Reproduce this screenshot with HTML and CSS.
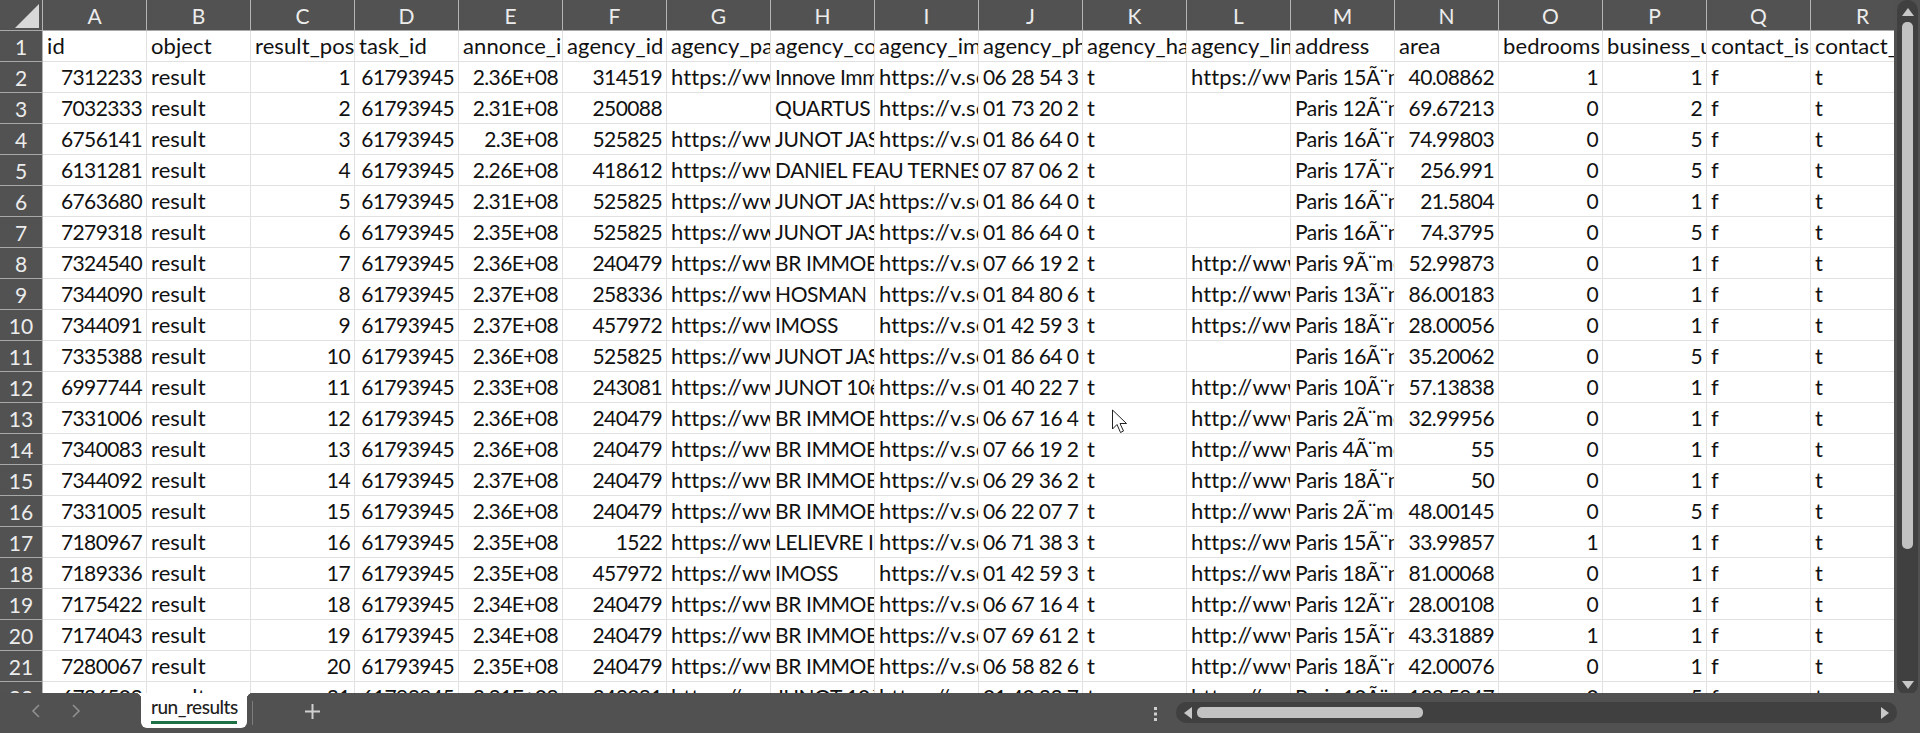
FILE: index.html
```html
<!DOCTYPE html>
<html lang="en">
<head>
<meta charset="utf-8">
<title>run_results</title>
<link rel="stylesheet" href="styles.css">
</head>
<body>
<div class="app">
<div class="sheet">
<div class="grid">
<table class="cells">
<thead>
<tr><th class="corner"><svg class="corner-mark" width="26" height="26" viewBox="0 0 26 26"><path d="M1 25 25 1v24z"/></svg></th><th>A</th><th>B</th><th>C</th><th>D</th><th>E</th><th>F</th><th>G</th><th>H</th><th>I</th><th>J</th><th>K</th><th>L</th><th>M</th><th>N</th><th>O</th><th>P</th><th>Q</th><th>R</th></tr>
</thead>
<tbody>
<tr><th>1</th><td>id</td><td>object</td><td>result_position</td><td>task_id</td><td>annonce_id</td><td>agency_id</td><td>agency_page</td><td>agency_code</td><td>agency_img</td><td>agency_phone</td><td>agency_has</td><td>agency_link</td><td>address</td><td>area</td><td>bedrooms</td><td>business_unit</td><td>contact_is</td><td>contact_name</td></tr>
<tr><th>2</th><td class="n">7312233</td><td>result</td><td class="n">1</td><td class="n">61793945</td><td class="n">2.36E+08</td><td class="n">314519</td><td>https://www</td><td class="c">Innove Immo</td><td>https://v.seloger</td><td class="p">06 28 54 3</td><td>t</td><td>https://www</td><td class="c">Paris 15Ã¨me</td><td class="n">40.08862</td><td class="n">1</td><td class="n">1</td><td>f</td><td>t</td></tr>
<tr><th>3</th><td class="n">7032333</td><td>result</td><td class="n">2</td><td class="n">61793945</td><td class="n">2.31E+08</td><td class="n">250088</td><td></td><td class="c">QUARTUS</td><td>https://v.seloger</td><td class="p">01 73 20 2</td><td>t</td><td></td><td class="c">Paris 12Ã¨me</td><td class="n">69.67213</td><td class="n">0</td><td class="n">2</td><td>f</td><td>t</td></tr>
<tr><th>4</th><td class="n">6756141</td><td>result</td><td class="n">3</td><td class="n">61793945</td><td class="n">2.3E+08</td><td class="n">525825</td><td>https://www</td><td class="c">JUNOT JASMIN</td><td>https://v.seloger</td><td class="p">01 86 64 0</td><td>t</td><td></td><td class="c">Paris 16Ã¨me</td><td class="n">74.99803</td><td class="n">0</td><td class="n">5</td><td>f</td><td>t</td></tr>
<tr><th>5</th><td class="n">6131281</td><td>result</td><td class="n">4</td><td class="n">61793945</td><td class="n">2.26E+08</td><td class="n">418612</td><td>https://www</td><td class="c" colspan="2">DANIEL FEAU TERNES</td><td class="p">07 87 06 2</td><td>t</td><td></td><td class="c">Paris 17Ã¨me</td><td class="n">256.991</td><td class="n">0</td><td class="n">5</td><td>f</td><td>t</td></tr>
<tr><th>6</th><td class="n">6763680</td><td>result</td><td class="n">5</td><td class="n">61793945</td><td class="n">2.31E+08</td><td class="n">525825</td><td>https://www</td><td class="c">JUNOT JASMIN</td><td>https://v.seloger</td><td class="p">01 86 64 0</td><td>t</td><td></td><td class="c">Paris 16Ã¨me</td><td class="n">21.5804</td><td class="n">0</td><td class="n">1</td><td>f</td><td>t</td></tr>
<tr><th>7</th><td class="n">7279318</td><td>result</td><td class="n">6</td><td class="n">61793945</td><td class="n">2.35E+08</td><td class="n">525825</td><td>https://www</td><td class="c">JUNOT JASMIN</td><td>https://v.seloger</td><td class="p">01 86 64 0</td><td>t</td><td></td><td class="c">Paris 16Ã¨me</td><td class="n">74.3795</td><td class="n">0</td><td class="n">5</td><td>f</td><td>t</td></tr>
<tr><th>8</th><td class="n">7324540</td><td>result</td><td class="n">7</td><td class="n">61793945</td><td class="n">2.36E+08</td><td class="n">240479</td><td>https://www</td><td class="c">BR IMMOBILIER</td><td>https://v.seloger</td><td class="p">07 66 19 2</td><td>t</td><td>http://www</td><td class="c">Paris 9Ã¨me</td><td class="n">52.99873</td><td class="n">0</td><td class="n">1</td><td>f</td><td>t</td></tr>
<tr><th>9</th><td class="n">7344090</td><td>result</td><td class="n">8</td><td class="n">61793945</td><td class="n">2.37E+08</td><td class="n">258336</td><td>https://www</td><td class="c">HOSMAN</td><td>https://v.seloger</td><td class="p">01 84 80 6</td><td>t</td><td>http://www</td><td class="c">Paris 13Ã¨me</td><td class="n">86.00183</td><td class="n">0</td><td class="n">1</td><td>f</td><td>t</td></tr>
<tr><th>10</th><td class="n">7344091</td><td>result</td><td class="n">9</td><td class="n">61793945</td><td class="n">2.37E+08</td><td class="n">457972</td><td>https://www</td><td class="c">IMOSS</td><td>https://v.seloger</td><td class="p">01 42 59 3</td><td>t</td><td>https://www</td><td class="c">Paris 18Ã¨me</td><td class="n">28.00056</td><td class="n">0</td><td class="n">1</td><td>f</td><td>t</td></tr>
<tr><th>11</th><td class="n">7335388</td><td>result</td><td class="n">10</td><td class="n">61793945</td><td class="n">2.36E+08</td><td class="n">525825</td><td>https://www</td><td class="c">JUNOT JASMIN</td><td>https://v.seloger</td><td class="p">01 86 64 0</td><td>t</td><td></td><td class="c">Paris 16Ã¨me</td><td class="n">35.20062</td><td class="n">0</td><td class="n">5</td><td>f</td><td>t</td></tr>
<tr><th>12</th><td class="n">6997744</td><td>result</td><td class="n">11</td><td class="n">61793945</td><td class="n">2.33E+08</td><td class="n">243081</td><td>https://www</td><td class="c">JUNOT 10ème</td><td>https://v.seloger</td><td class="p">01 40 22 7</td><td>t</td><td>http://www</td><td class="c">Paris 10Ã¨me</td><td class="n">57.13838</td><td class="n">0</td><td class="n">1</td><td>f</td><td>t</td></tr>
<tr><th>13</th><td class="n">7331006</td><td>result</td><td class="n">12</td><td class="n">61793945</td><td class="n">2.36E+08</td><td class="n">240479</td><td>https://www</td><td class="c">BR IMMOBILIER</td><td>https://v.seloger</td><td class="p">06 67 16 4</td><td>t</td><td>http://www</td><td class="c">Paris 2Ã¨me</td><td class="n">32.99956</td><td class="n">0</td><td class="n">1</td><td>f</td><td>t</td></tr>
<tr><th>14</th><td class="n">7340083</td><td>result</td><td class="n">13</td><td class="n">61793945</td><td class="n">2.36E+08</td><td class="n">240479</td><td>https://www</td><td class="c">BR IMMOBILIER</td><td>https://v.seloger</td><td class="p">07 66 19 2</td><td>t</td><td>http://www</td><td class="c">Paris 4Ã¨me</td><td class="n">55</td><td class="n">0</td><td class="n">1</td><td>f</td><td>t</td></tr>
<tr><th>15</th><td class="n">7344092</td><td>result</td><td class="n">14</td><td class="n">61793945</td><td class="n">2.37E+08</td><td class="n">240479</td><td>https://www</td><td class="c">BR IMMOBILIER</td><td>https://v.seloger</td><td class="p">06 29 36 2</td><td>t</td><td>http://www</td><td class="c">Paris 18Ã¨me</td><td class="n">50</td><td class="n">0</td><td class="n">1</td><td>f</td><td>t</td></tr>
<tr><th>16</th><td class="n">7331005</td><td>result</td><td class="n">15</td><td class="n">61793945</td><td class="n">2.36E+08</td><td class="n">240479</td><td>https://www</td><td class="c">BR IMMOBILIER</td><td>https://v.seloger</td><td class="p">06 22 07 7</td><td>t</td><td>http://www</td><td class="c">Paris 2Ã¨me</td><td class="n">48.00145</td><td class="n">0</td><td class="n">5</td><td>f</td><td>t</td></tr>
<tr><th>17</th><td class="n">7180967</td><td>result</td><td class="n">16</td><td class="n">61793945</td><td class="n">2.35E+08</td><td class="n">1522</td><td>https://www</td><td class="c">LELIEVRE IMMO</td><td>https://v.seloger</td><td class="p">06 71 38 3</td><td>t</td><td>https://www</td><td class="c">Paris 15Ã¨me</td><td class="n">33.99857</td><td class="n">1</td><td class="n">1</td><td>f</td><td>t</td></tr>
<tr><th>18</th><td class="n">7189336</td><td>result</td><td class="n">17</td><td class="n">61793945</td><td class="n">2.35E+08</td><td class="n">457972</td><td>https://www</td><td class="c">IMOSS</td><td>https://v.seloger</td><td class="p">01 42 59 3</td><td>t</td><td>https://www</td><td class="c">Paris 18Ã¨me</td><td class="n">81.00068</td><td class="n">0</td><td class="n">1</td><td>f</td><td>t</td></tr>
<tr><th>19</th><td class="n">7175422</td><td>result</td><td class="n">18</td><td class="n">61793945</td><td class="n">2.34E+08</td><td class="n">240479</td><td>https://www</td><td class="c">BR IMMOBILIER</td><td>https://v.seloger</td><td class="p">06 67 16 4</td><td>t</td><td>http://www</td><td class="c">Paris 12Ã¨me</td><td class="n">28.00108</td><td class="n">0</td><td class="n">1</td><td>f</td><td>t</td></tr>
<tr><th>20</th><td class="n">7174043</td><td>result</td><td class="n">19</td><td class="n">61793945</td><td class="n">2.34E+08</td><td class="n">240479</td><td>https://www</td><td class="c">BR IMMOBILIER</td><td>https://v.seloger</td><td class="p">07 69 61 2</td><td>t</td><td>http://www</td><td class="c">Paris 15Ã¨me</td><td class="n">43.31889</td><td class="n">1</td><td class="n">1</td><td>f</td><td>t</td></tr>
<tr><th>21</th><td class="n">7280067</td><td>result</td><td class="n">20</td><td class="n">61793945</td><td class="n">2.35E+08</td><td class="n">240479</td><td>https://www</td><td class="c">BR IMMOBILIER</td><td>https://v.seloger</td><td class="p">06 58 82 6</td><td>t</td><td>http://www</td><td class="c">Paris 18Ã¨me</td><td class="n">42.00076</td><td class="n">0</td><td class="n">1</td><td>f</td><td>t</td></tr>
<tr><th>22</th><td class="n">6786503</td><td>result</td><td class="n">21</td><td class="n">61793945</td><td class="n">2.31E+08</td><td class="n">243081</td><td>https://www</td><td class="c">JUNOT 10ème</td><td>https://v.seloger</td><td class="p">01 40 22 7</td><td>t</td><td>https://www</td><td class="c">Paris 10Ã¨me</td><td class="n">128.5947</td><td class="n">0</td><td class="n">5</td><td>f</td><td>t</td></tr>
</tbody>
</table>
<svg class="cursor" width="17" height="25" viewBox="0 0 17 25"><path d="M1.5 1v19l4.500-4.500 3.500 8 3-1.500-3.500-7.500h6.500z"/></svg>
</div>
<div class="vscroll">
<div class="vtrack">
<svg class="arrow" width="12" height="8" viewBox="0 0 12 8"><path d="M6 0l6 8H0z"/></svg>
<div class="vthumb"></div>
<svg class="arrow arrow-down" width="12" height="8" viewBox="0 0 12 8"><path d="M0 0h12L6 8z"/></svg>
</div>
</div>
</div>
<div class="statusbar">
<div class="tabnav">
<svg width="10" height="14" viewBox="0 0 10 14"><path d="M8 1 2 7l6 6"/></svg>
<svg width="10" height="14" viewBox="0 0 10 14"><path d="M2 1l6 6-6 6"/></svg>
</div>
<div class="tab"><span class="tab-label">run_results</span></div>
<div class="tabsep"></div>
<svg class="addsheet" width="15" height="15" viewBox="0 0 15 15"><path d="M7.500 0v15M0 7.500h15"/></svg>
<div class="spacer"></div>
<svg class="kebab" width="4" height="14" viewBox="0 0 4 14"><path d="M0 0h3v3H0zM0 5.500h3v3H0zM0 11h3v3H0z"/></svg>
<div class="htrack">
<svg class="arrow" width="8" height="12" viewBox="0 0 8 12"><path d="M8 0v12L0 6z"/></svg>
<div class="hthumb"></div>
<svg class="arrow arrow-right" width="8" height="12" viewBox="0 0 8 12"><path d="M0 0l8 6-8 6z"/></svg>
</div>
</div>
</div>
</body>
</html>
```
FILE: styles.css
```css
* { box-sizing: border-box; }
html, body { margin: 0; padding: 0; height: 100%; overflow: hidden; }
body { background: #515151; font-family: Lato, "Open Sans", sans-serif; }
.app { display: flex; flex-direction: column; width: 1920px; height: 733px; }

.sheet { display: flex; height: 693px; }
.grid { position: relative; width: 1894px; overflow: hidden; background: #fff; }
.cells { table-layout: fixed; width: 1915px; border-collapse: separate; border-spacing: 0; }
.cells th, .cells td { height: 31px; padding: 0; white-space: nowrap; overflow: hidden; }

.cells th {
  width: 104px;
  background: #525252;
  color: #ececec;
  font-weight: 400;
  font-size: 21px;
  text-align: center;
  border-right: 1px solid #b4b4b4;
  border-bottom: 1px solid #a8a8a8;
}
.cells th:first-child { width: 43px; }
.corner { position: relative; }
.corner-mark { display: block; margin: 2px 0 0 14px; fill: #d8d8d8; }

.cells td {
  padding: 0 4px;
  color: #111;
  font-size: 22px;
  letter-spacing: 0.1px;
  line-height: 30px;
  vertical-align: bottom;
  border-right: 1px solid #e1e1e1;
  border-bottom: 1px solid #e1e1e1;
}
.cells td.n, .cells td.p { font-size: 21px; letter-spacing: -0.6px; }
.cells td.c { font-size: 21px; letter-spacing: -0.4px; }
.cells td.n { text-align: right; }

.cursor { position: absolute; left: 1111px; top: 409px; fill: #fff; stroke: #222; stroke-width: 1; }

.vscroll { width: 26px; padding: 0 2px 0 3px; background: #515151; }
.vtrack {
  display: flex;
  flex-direction: column;
  align-items: center;
  height: 695px;
  padding: 8px 0 6px;
  background: #404040;
  border-radius: 10px;
}
.vthumb { width: 11px; height: 527px; margin-top: 6px; background: #c2c2c2; border-radius: 5px; }
.arrow { display: block; flex: none; fill: #c8c8c8; }
.arrow-down { margin-top: auto; }

.statusbar { position: relative; display: flex; align-items: flex-start; height: 40px; background: #515151; }
.tabnav { display: flex; gap: 30px; width: 141px; padding: 11px 0 0 31px; }
.tabnav svg { fill: none; stroke: #8f8f8f; stroke-width: 1.6; }
.tab {
  position: relative;
  width: 106px;
  height: 35px;
  padding: 0 10px;
  background: #fff;
  border-radius: 0 0 6px 6px;
}
.tab::before, .tab::after { content: ""; position: absolute; top: 0; width: 6px; height: 6px; }
.tab::before { left: -6px; background: radial-gradient(circle at 0 100%, transparent 6px, #fff 6.5px); }
.tab::after { right: -6px; background: radial-gradient(circle at 100% 100%, transparent 6px, #fff 6.5px); }
.tab-label {
  display: block;
  height: 31px;
  color: #1f1f1f;
  font-size: 19px;
  font-weight: 500;
  letter-spacing: -0.5px;
  line-height: 27px;
  text-align: center;
  border-bottom: 3px solid #1e7145;
}
.tabsep { width: 1px; height: 24px; margin: 8px 0 0 5px; background: #7c7c7c; }
.addsheet { margin: 11px 0 0 52px; fill: none; stroke: #d0d0d0; stroke-width: 2; }
.spacer { flex: 1; }
.kebab { margin: 14px 18px 0 0; fill: #d0d0d0; }
.htrack {
  display: flex;
  align-items: center;
  width: 721px;
  height: 21px;
  margin: 9px 23px 0 0;
  padding: 0 8px;
  background: #404040;
  border-radius: 10px;
}
.hthumb { width: 226px; height: 11px; margin-left: 5px; background: #c2c2c2; border-radius: 5px; }
.arrow-right { margin-left: auto; }
```
